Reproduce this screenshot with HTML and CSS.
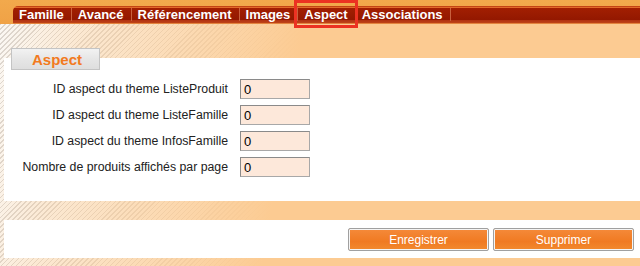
FILE: index.html
```html
<!DOCTYPE html>
<html lang="fr">
<head>
<meta charset="utf-8">
<title>Aspect</title>
<link rel="stylesheet" href="styles.css">
</head>
<body>
<div class="top">
  <ul class="tabs">
    <li class="tab">Famille</li>
    <li class="tab">Avancé</li>
    <li class="tab">Référencement</li>
    <li class="tab">Images</li>
    <li class="tab tab-active">Aspect</li>
    <li class="tab">Associations</li>
    <li class="tab-rest"></li>
  </ul>
</div>
<div class="stage">
  <div class="section-title">Aspect</div>
  <div class="panel">
    <div class="form">
      <label class="lbl">ID aspect du theme ListeProduit</label>
      <div class="field">0</div>
      <label class="lbl">ID aspect du theme ListeFamille</label>
      <div class="field">0</div>
      <label class="lbl">ID aspect du theme InfosFamille</label>
      <div class="field">0</div>
      <label class="lbl">Nombre de produits affichés par page</label>
      <div class="field">0</div>
    </div>
  </div>
  <div class="panel actions">
    <button class="btn">Enregistrer</button>
    <button class="btn">Supprimer</button>
  </div>
</div>
</body>
</html>
```

FILE: styles.css
```css
html, body {
  margin: 0;
  padding: 0;
  height: 266px;
  overflow: hidden;
  font-family: "Liberation Sans", Arial, sans-serif;
  background: #fccb92;
}

.top {
  height: 24px;
  box-sizing: border-box;
  padding: 6px 0 0 13px;
  background: linear-gradient(to bottom, #f2a94c 0, #f0a246 24px);
}

.tabs {
  list-style: none;
  margin: 0;
  padding: 0;
  display: flex;
  height: 18px;
  border-radius: 5px 0 0 0;
  background: linear-gradient(to bottom,
    #c44414 0, #c44414 1px,
    #e26a2a 1px, #e26a2a 2px,
    #a21f02 2px, #931800 14px,
    #b23212 14px, #bf4418 17px,
    #e4843e 17px, #e4843e 18px);
}

.tab {
  position: relative;
  padding: 0 7px 0 6px;
  margin-top: 2px;
  height: 13px;
  line-height: 14px;
  font-size: 13px;
  font-weight: bold;
  color: #fff;
  border-right: 1px solid #c8603e;
  white-space: nowrap;
}

.tab-rest {
  flex: 1;
}

.tab-active::after {
  content: "";
  position: absolute;
  top: -8px;
  left: -4px;
  right: -3px;
  height: 28px;
  box-sizing: border-box;
  border: 3px solid #ec3222;
}

.stage {
  padding: 24px 0 8px 4px;
  background:
    linear-gradient(100deg, rgba(252,203,146,0) 0px, rgba(252,203,146,0.35) 80px, #fccb92 300px),
    repeating-linear-gradient(135deg, #dcd6d0 0 1px, #fbf8f4 1px 3.5px);
}

.section-title {
  position: relative;
  z-index: 1;
  width: 89px;
  height: 22px;
  box-sizing: border-box;
  margin: 0 0 -12px 7px;
  padding-left: 20px;
  border: 1px solid #c4c4c4;
  background: linear-gradient(to bottom, #f2f2f2 0, #e6e6e6 50%, #dedede 100%);
  color: #f27a1e;
  font-size: 15px;
  font-weight: bold;
  line-height: 22px;
}

.panel {
  background: #fff;
}

.panel + .panel {
  margin-top: 19px;
}

.form {
  height: 143px;
  box-sizing: border-box;
  padding-top: 21px;
  display: grid;
  grid-template-columns: 224px 70px;
  grid-auto-rows: 20px;
  column-gap: 12px;
  row-gap: 6px;
  align-content: start;
  align-items: center;
}

.lbl {
  text-align: right;
  font-size: 12.3px;
  color: #222;
  white-space: nowrap;
}

.field {
  height: 20px;
  box-sizing: border-box;
  border: 1px solid #8a8a8a;
  border-right-color: #a8a8a8;
  border-bottom-color: #a8a8a8;
  background: #fde8da;
  padding-left: 3px;
  font-size: 13px;
  line-height: 19px;
  color: #000;
}

.actions {
  height: 38px;
  box-sizing: border-box;
  padding: 8px 6px 0 0;
  display: flex;
  justify-content: flex-end;
  align-items: flex-start;
  gap: 4px;
}

.btn {
  width: 141px;
  height: 23px;
  box-sizing: border-box;
  margin: 0;
  padding: 0;
  border: 1px solid #a0a0a0;
  border-radius: 2px;
  box-shadow: inset 0 0 0 1px #f4f4f4;
  background: linear-gradient(to bottom, #f58a3a 0, #f07a22 60%, #f28a2e 100%);
  color: #fff;
  font-family: "Liberation Sans", Arial, sans-serif;
  font-size: 12px;
  line-height: 20px;
}
```
